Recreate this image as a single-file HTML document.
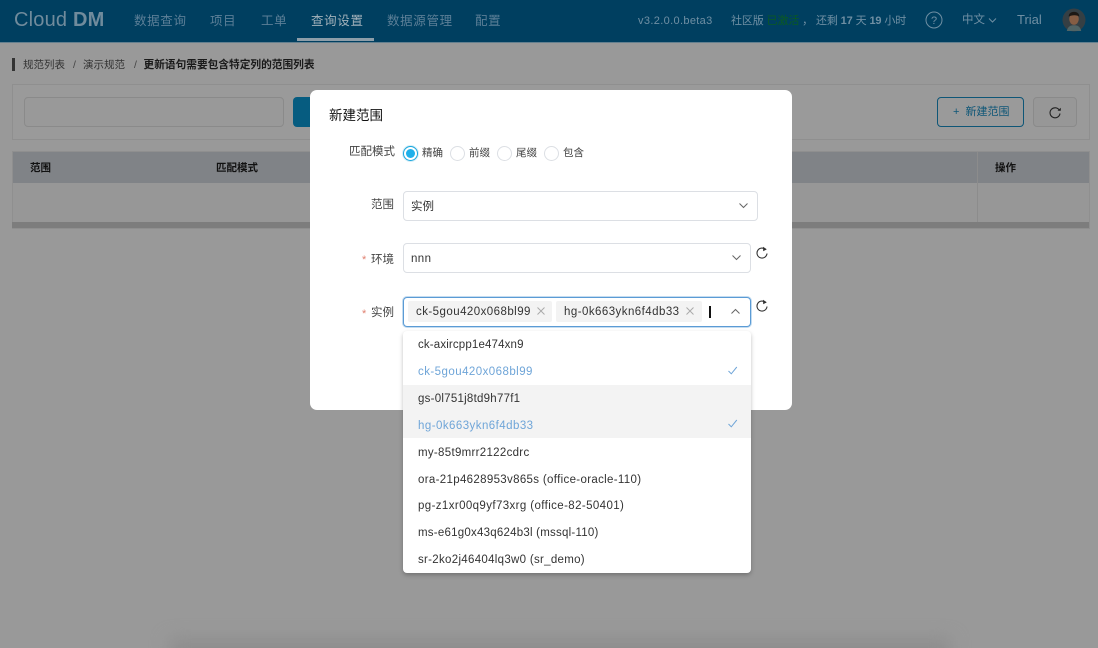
<!DOCTYPE html>
<html lang="zh">
<head>
<meta charset="utf-8">
<style>
html,body{margin:0;padding:0;width:1098px;height:648px;overflow:hidden;background:#999;font-family:"Liberation Sans","Noto Sans CJK SC",sans-serif;}
#w{position:relative;width:1098px;height:648px;overflow:hidden;background:#999;}
.a{position:absolute;white-space:nowrap;}
.nav{top:13px;font-size:12.5px;line-height:16px;color:#5c7f97;letter-spacing:.65px;}
.hd{top:14px;font-size:11px;line-height:14px;color:#6f8fa3;}
.box{position:absolute;box-sizing:border-box;}
.lbl{font-size:11.5px;line-height:16px;color:#444;}
.sel{position:absolute;box-sizing:border-box;background:#fff;border:1px solid #dcdfe4;border-radius:4px;}
.t{font-size:11.5px;line-height:16px;color:#333;}
.radio{position:absolute;box-sizing:border-box;width:15px;height:15px;border-radius:50%;border:1px solid #dcdfe4;background:#fff;top:146px;}
.opt{position:absolute;left:418px;font-size:11.5px;line-height:16px;color:#333;white-space:nowrap;}
.tag{position:absolute;top:301px;height:21px;background:#f3f3f3;border-radius:2px;}
</style>
</head>
<body>
<div id="w">
<!-- bottom shadow band -->
<div class="box" style="left:170px;top:640px;width:780px;height:30px;background:#8c8c8c;filter:blur(9px)"></div>

<!-- header -->
<div class="box" style="left:0;top:0;width:1098px;height:43px;background:#003f60;border-bottom:1px solid #64808f"></div>
<div class="a" style="left:14px;top:7px;font-size:20px;line-height:26px;color:#708b9c;letter-spacing:.2px">Cloud <b style="font-weight:700">DM</b></div>
<div class="a nav" style="left:134px">数据查询</div>
<div class="a nav" style="left:210px">项目</div>
<div class="a nav" style="left:261px">工单</div>
<div class="a nav" style="left:311px;color:#a3b2bb">查询设置</div>
<div class="a nav" style="left:387px">数据源管理</div>
<div class="a nav" style="left:475px">配置</div>
<div class="box" style="left:297px;top:38px;width:77px;height:3px;background:#8d9ea9"></div>
<div class="a hd" style="left:638px;letter-spacing:.35px">v3.2.0.0.beta3</div>
<div class="a hd" style="left:731px;letter-spacing:-.12px">社区版 <span style="color:#0a5a22">已激活</span> ，&nbsp;还剩 <b>17</b> 天 <b>19</b> 小时</div>
<svg class="a" style="left:925px;top:11px" width="18" height="18" viewBox="0 0 18 18"><circle cx="9" cy="9" r="8" fill="none" stroke="#6f8fa3" stroke-width="1"/><text x="9" y="13" text-anchor="middle" font-size="11" fill="#6f8fa3" font-family="Liberation Sans">?</text></svg>
<div class="a" style="left:962px;top:12px;font-size:11.5px;line-height:16px;color:#6f8fa3">中文</div>
<svg class="a" style="left:988px;top:17px" width="9" height="7" viewBox="0 0 9 7"><path d="M1 1.500L4.500 5L8 1.500" fill="none" stroke="#6f8fa3" stroke-width="1"/></svg>
<div class="a" style="left:1017px;top:12px;font-size:13px;line-height:16px;color:#6f8fa3">Trial</div>
<svg class="a" style="left:1062px;top:8px" width="24" height="24" viewBox="0 0 25 25"><circle cx="12.500" cy="12.500" r="12" fill="#353f44"/><path d="M5 24c1-5 4-6 7.500-6s6.500 1 7.500 6z" fill="#506466"/><ellipse cx="12.500" cy="11.500" rx="5" ry="6" fill="#855d44"/><path d="M7 9c0-4 3-5 5.500-5s5.500 1 5.500 5c-2-2-8-2-11 0z" fill="#1c1815"/></svg>

<!-- breadcrumb -->
<div class="box" style="left:12px;top:58px;width:3px;height:13px;background:#333"></div>
<div class="a" style="left:23px;top:58px;font-size:10.500px;line-height:15px;color:#333">规范列表</div>
<div class="a" style="left:73px;top:58px;font-size:10.500px;line-height:15px;color:#444">/</div>
<div class="a" style="left:83px;top:58px;font-size:10.500px;line-height:15px;color:#333">演示规范</div>
<div class="a" style="left:134px;top:58px;font-size:10.500px;line-height:15px;color:#444">/</div>
<div class="a" style="left:143.500px;top:58px;font-size:10.700px;line-height:15px;color:#1a1a1a;font-weight:700">更新语句需要包含特定列的范围列表</div>

<!-- toolbar -->
<div class="box" style="left:12px;top:84px;width:1078px;height:56px;border:1px solid #8f8f8f;background:#9a9a9a"></div>
<div class="box" style="left:24px;top:97px;width:260px;height:30px;border:1px solid #8a8a8a;border-radius:4px;background:#999"></div>
<div class="box" style="left:293px;top:97px;width:40px;height:30px;background:#065c80;border-radius:4px"></div>
<div class="box" style="left:937px;top:97px;width:87px;height:30px;border:1px solid #0e5677;border-radius:4px"></div>
<div class="a" style="left:953px;top:105px;font-size:11px;line-height:15px;color:#0e5677">+&nbsp;&nbsp;新建范围</div>
<div class="box" style="left:1033px;top:97px;width:44px;height:30px;border:1px solid #8a8a8a;border-radius:4px;background:#979797"></div>
<svg class="a" style="left:1048px;top:106px" width="14" height="14" viewBox="0 0 14 14"><path d="M11.500 4.500A5 5 0 1 0 12 7.500" fill="none" stroke="#222" stroke-width="1.100"/><path d="M9.500 4.800h3.300v-3z" fill="#222"/></svg>

<!-- table -->
<div class="box" style="left:12px;top:151px;width:1078px;height:78px;border:1px solid #8f8f8f;background:#979797"></div>
<div class="box" style="left:13px;top:152px;width:1076px;height:31px;background:#808387"></div>
<div class="box" style="left:977px;top:152px;width:1px;height:70px;background:#8c8c8c"></div>
<div class="box" style="left:12px;top:222px;width:1077px;height:6px;background:#7d7d7d"></div>
<div class="a" style="left:30px;top:161px;font-size:10.500px;line-height:15px;font-weight:700;color:#111">范围</div>
<div class="a" style="left:216px;top:161px;font-size:10.500px;line-height:15px;font-weight:700;color:#111">匹配模式</div>
<div class="a" style="left:995px;top:161px;font-size:10.500px;line-height:15px;font-weight:700;color:#111">操作</div>

<!-- modal -->
<div class="box" style="left:310px;top:90px;width:482px;height:320px;background:#fff;border-radius:7px"></div>
<div class="a" style="left:329px;top:106px;font-size:13.500px;line-height:19px;color:#111">新建范围</div>

<div class="a lbl" style="left:349px;top:144px">匹配模式</div>
<div class="radio" style="left:403px;border-color:#19a6dc;box-shadow:0 0 0 1px #d5eef8"></div>
<div class="box" style="left:406px;top:149px;width:9px;height:9px;border-radius:50%;background:#1fb0ea"></div>
<div class="a" style="left:422px;top:146px;font-size:10.500px;line-height:15px;color:#444">精确</div>
<div class="radio" style="left:450px"></div>
<div class="a" style="left:469px;top:146px;font-size:10.500px;line-height:15px;color:#444">前缀</div>
<div class="radio" style="left:497px"></div>
<div class="a" style="left:516px;top:146px;font-size:10.500px;line-height:15px;color:#444">尾缀</div>
<div class="radio" style="left:544px"></div>
<div class="a" style="left:563px;top:146px;font-size:10.500px;line-height:15px;color:#444">包含</div>

<div class="a lbl" style="left:371px;top:197px">范围</div>
<div class="sel" style="left:403px;top:191px;width:355px;height:30px"></div>
<div class="a t" style="left:411px;top:198.500px">实例</div>
<svg class="a" style="left:738px;top:201px" width="11" height="9" viewBox="0 0 11 9"><path d="M1.500 2.500L5.500 6.500L9.500 2.500" fill="none" stroke="#666" stroke-width="1"/></svg>

<div class="a" style="left:362px;top:252px;font-size:11px;line-height:16px;color:#e0806f">*</div>
<div class="a lbl" style="left:371px;top:252px">环境</div>
<div class="sel" style="left:403px;top:243px;width:348px;height:30px"></div>
<div class="a t" style="left:411px;top:251px;letter-spacing:.4px">nnn</div>
<svg class="a" style="left:731px;top:253px" width="11" height="9" viewBox="0 0 11 9"><path d="M1.500 2.500L5.500 6.500L9.500 2.500" fill="none" stroke="#666" stroke-width="1"/></svg>
<svg class="a" style="left:755px;top:246px" width="14" height="14" viewBox="0 0 14 14"><path d="M10.800 3.800A5 5 0 1 0 12 7.500" fill="none" stroke="#333" stroke-width="1.100"/><path d="M8 .8L11.800 3.300L8.200 5.200z" fill="#333"/></svg>

<div class="a" style="left:362px;top:306px;font-size:11px;line-height:16px;color:#e0806f">*</div>
<div class="a lbl" style="left:371px;top:305px">实例</div>
<div class="sel" style="left:403px;top:297px;width:348px;height:30px;border-color:#5b9bd5;box-shadow:0 0 0 1px #c4dcf0"></div>
<div class="tag" style="left:408px;width:144px"></div>
<div class="a t" style="left:416px;top:304px;color:#333;letter-spacing:.45px">ck-5gou420x068bl99</div>
<svg class="a" style="left:536px;top:306px" width="10" height="10" viewBox="0 0 10 10"><path d="M1.500 1.500L8.500 8.500M8.500 1.500L1.500 8.500" stroke="#aaa" stroke-width="1"/></svg>
<div class="tag" style="left:556px;width:146px"></div>
<div class="a t" style="left:564px;top:304px;color:#333;letter-spacing:.45px">hg-0k663ykn6f4db33</div>
<svg class="a" style="left:685px;top:306px" width="10" height="10" viewBox="0 0 10 10"><path d="M1.500 1.500L8.500 8.500M8.500 1.500L1.500 8.500" stroke="#aaa" stroke-width="1"/></svg>
<div class="box" style="left:709px;top:306px;width:2px;height:12px;background:#111"></div>
<svg class="a" style="left:730px;top:307px" width="11" height="9" viewBox="0 0 11 9"><path d="M1.500 6.500L5.500 2.500L9.500 6.500" fill="none" stroke="#666" stroke-width="1"/></svg>
<svg class="a" style="left:755px;top:299px" width="14" height="14" viewBox="0 0 14 14"><path d="M10.800 3.800A5 5 0 1 0 12 7.500" fill="none" stroke="#333" stroke-width="1.100"/><path d="M8 .8L11.800 3.300L8.200 5.200z" fill="#333"/></svg>

<!-- dropdown -->
<div class="box" style="left:403px;top:331px;width:348px;height:242px;background:#fff;border-radius:4px;box-shadow:0 2px 4px rgba(0,0,0,.25)"></div>
<div class="box" style="left:403px;top:385px;width:348px;height:53px;background:#f3f3f3"></div>
<div class="opt" style="top:337px;letter-spacing:.15px">ck-axircpp1e474xn9</div>
<div class="opt" style="top:364px;letter-spacing:.45px;color:#6fa5d8">ck-5gou420x068bl99</div>
<div class="opt" style="top:391px;letter-spacing:.25px">gs-0l751j8td9h77f1</div>
<div class="opt" style="top:418px;letter-spacing:.45px;color:#6fa5d8">hg-0k663ykn6f4db33</div>
<div class="opt" style="top:445px;letter-spacing:.3px">my-85t9mrr2122cdrc</div>
<div class="opt" style="top:472px;letter-spacing:.33px">ora-21p4628953v865s (office-oracle-110)</div>
<div class="opt" style="top:498px;letter-spacing:.39px">pg-z1xr00q9yf73xrg (office-82-50401)</div>
<div class="opt" style="top:525px;letter-spacing:.23px">ms-e61g0x43q624b3l (mssql-110)</div>
<div class="opt" style="top:552px;letter-spacing:.3px">sr-2ko2j46404lq3w0 (sr_demo)</div>
<svg class="a" style="left:727px;top:365px" width="11" height="11" viewBox="0 0 11 11"><path d="M1.500 6L4.300 8.800L9.800 2" fill="none" stroke="#6fa5d8" stroke-width="1"/></svg>
<svg class="a" style="left:727px;top:418px" width="11" height="11" viewBox="0 0 11 11"><path d="M1.500 6L4.300 8.800L9.800 2" fill="none" stroke="#6fa5d8" stroke-width="1"/></svg>
</div>
</body>
</html>
